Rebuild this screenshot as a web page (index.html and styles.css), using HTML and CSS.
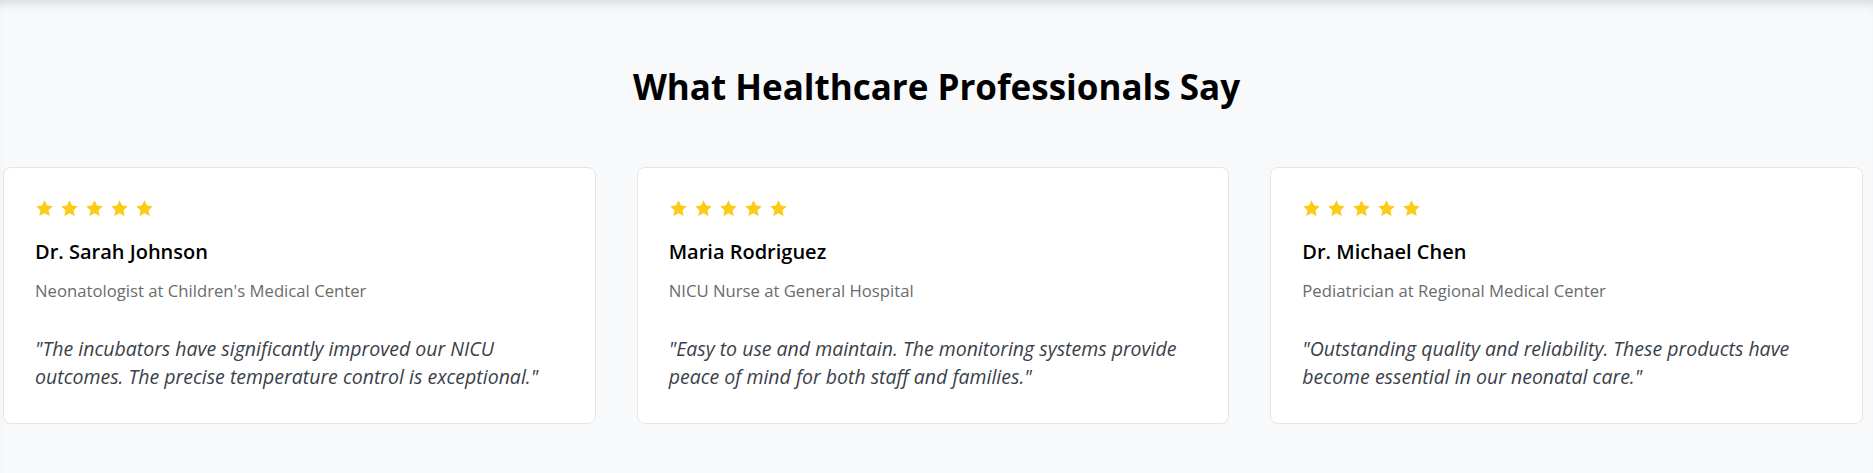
FILE: index.html
```html
<!DOCTYPE html>
<html lang="en">
<head>
<meta charset="utf-8">
<title>Testimonials</title>
<link rel="stylesheet" href="styles.css">
</head>
<body>
<section class="testimonials">
  <h2 class="section-title">What Healthcare Professionals Say</h2>
  <div class="grid">
    <article class="card">
      <div class="stars">
        <svg viewBox="0 0 24 24"><path d="M12 1.5l3.2 6.7 7.3.9-5.4 5.1 1.4 7.3L12 18l-6.5 3.5 1.4-7.3-5.4-5.1 7.3-.9z"/></svg>
        <svg viewBox="0 0 24 24"><path d="M12 1.5l3.2 6.7 7.3.9-5.4 5.1 1.4 7.3L12 18l-6.5 3.5 1.4-7.3-5.4-5.1 7.3-.9z"/></svg>
        <svg viewBox="0 0 24 24"><path d="M12 1.5l3.2 6.7 7.3.9-5.4 5.1 1.4 7.3L12 18l-6.5 3.5 1.4-7.3-5.4-5.1 7.3-.9z"/></svg>
        <svg viewBox="0 0 24 24"><path d="M12 1.5l3.2 6.7 7.3.9-5.4 5.1 1.4 7.3L12 18l-6.5 3.5 1.4-7.3-5.4-5.1 7.3-.9z"/></svg>
        <svg viewBox="0 0 24 24"><path d="M12 1.5l3.2 6.7 7.3.9-5.4 5.1 1.4 7.3L12 18l-6.5 3.5 1.4-7.3-5.4-5.1 7.3-.9z"/></svg>
      </div>
      <h3 class="name">Dr. Sarah Johnson</h3>
      <p class="role">Neonatologist at Children's Medical Center</p>
      <p class="quote">"The incubators have significantly improved our NICU outcomes. The precise temperature control is exceptional."</p>
    </article>
    <article class="card">
      <div class="stars">
        <svg viewBox="0 0 24 24"><path d="M12 1.5l3.2 6.7 7.3.9-5.4 5.1 1.4 7.3L12 18l-6.5 3.5 1.4-7.3-5.4-5.1 7.3-.9z"/></svg>
        <svg viewBox="0 0 24 24"><path d="M12 1.5l3.2 6.7 7.3.9-5.4 5.1 1.4 7.3L12 18l-6.5 3.5 1.4-7.3-5.4-5.1 7.3-.9z"/></svg>
        <svg viewBox="0 0 24 24"><path d="M12 1.5l3.2 6.7 7.3.9-5.4 5.1 1.4 7.3L12 18l-6.5 3.5 1.4-7.3-5.4-5.1 7.3-.9z"/></svg>
        <svg viewBox="0 0 24 24"><path d="M12 1.5l3.2 6.7 7.3.9-5.4 5.1 1.4 7.3L12 18l-6.5 3.5 1.4-7.3-5.4-5.1 7.3-.9z"/></svg>
        <svg viewBox="0 0 24 24"><path d="M12 1.5l3.2 6.7 7.3.9-5.4 5.1 1.4 7.3L12 18l-6.5 3.5 1.4-7.3-5.4-5.1 7.3-.9z"/></svg>
      </div>
      <h3 class="name">Maria Rodriguez</h3>
      <p class="role">NICU Nurse at General Hospital</p>
      <p class="quote">"Easy to use and maintain. The monitoring systems provide peace of mind for both staff and families."</p>
    </article>
    <article class="card">
      <div class="stars">
        <svg viewBox="0 0 24 24"><path d="M12 1.5l3.2 6.7 7.3.9-5.4 5.1 1.4 7.3L12 18l-6.5 3.5 1.4-7.3-5.4-5.1 7.3-.9z"/></svg>
        <svg viewBox="0 0 24 24"><path d="M12 1.5l3.2 6.7 7.3.9-5.4 5.1 1.4 7.3L12 18l-6.5 3.5 1.4-7.3-5.4-5.1 7.3-.9z"/></svg>
        <svg viewBox="0 0 24 24"><path d="M12 1.5l3.2 6.7 7.3.9-5.4 5.1 1.4 7.3L12 18l-6.5 3.5 1.4-7.3-5.4-5.1 7.3-.9z"/></svg>
        <svg viewBox="0 0 24 24"><path d="M12 1.5l3.2 6.7 7.3.9-5.4 5.1 1.4 7.3L12 18l-6.5 3.5 1.4-7.3-5.4-5.1 7.3-.9z"/></svg>
        <svg viewBox="0 0 24 24"><path d="M12 1.5l3.2 6.7 7.3.9-5.4 5.1 1.4 7.3L12 18l-6.5 3.5 1.4-7.3-5.4-5.1 7.3-.9z"/></svg>
      </div>
      <h3 class="name">Dr. Michael Chen</h3>
      <p class="role">Pediatrician at Regional Medical Center</p>
      <p class="quote">"Outstanding quality and reliability. These products have become essential in our neonatal care."</p>
    </article>
  </div>
</section>
</body>
</html>
```

FILE: styles.css
```css
* { box-sizing: border-box; }
html, body {
  margin: 0;
  padding: 0;
  background: #f8f9fa;
  font-family: "Open Sans", "Noto Sans", sans-serif;
  color: #111;
}
.testimonials {
  min-height: 473px;
  padding: 66px 10px 40px 3px;
  background: #f8f9fa;
  box-shadow: inset 0 9px 12px -7px rgba(0, 0, 0, 0.16);
}
.section-title {
  margin: 0 0 59px;
  text-align: center;
  font-size: 35px;
  line-height: 42px;
  font-weight: 700;
  color: #000;
  padding-left: 7px;
}
.grid {
  display: grid;
  grid-template-columns: repeat(3, 1fr);
  gap: 41px;
}
.card {
  background: #fff;
  border: 1px solid #e3e5e8;
  border-radius: 8px;
  padding: 31px 31px 33px;
}
.stars {
  display: flex;
  gap: 6px;
  height: 19px;
  margin-bottom: 22px;
}
.stars svg {
  width: 19px;
  height: 19px;
  fill: #fbcb17;
}
.name {
  margin: 0 0 15px;
  font-size: 20px;
  line-height: 24px;
  font-weight: 600;
  color: #000;
}
.role {
  margin: 0 0 32px;
  font-size: 16.7px;
  line-height: 24px;
  color: #6b6b6b;
}
.quote {
  margin: 0;
  font-size: 19.5px;
  line-height: 27.5px;
  font-style: italic;
  color: #3a3f4a;
}
```
